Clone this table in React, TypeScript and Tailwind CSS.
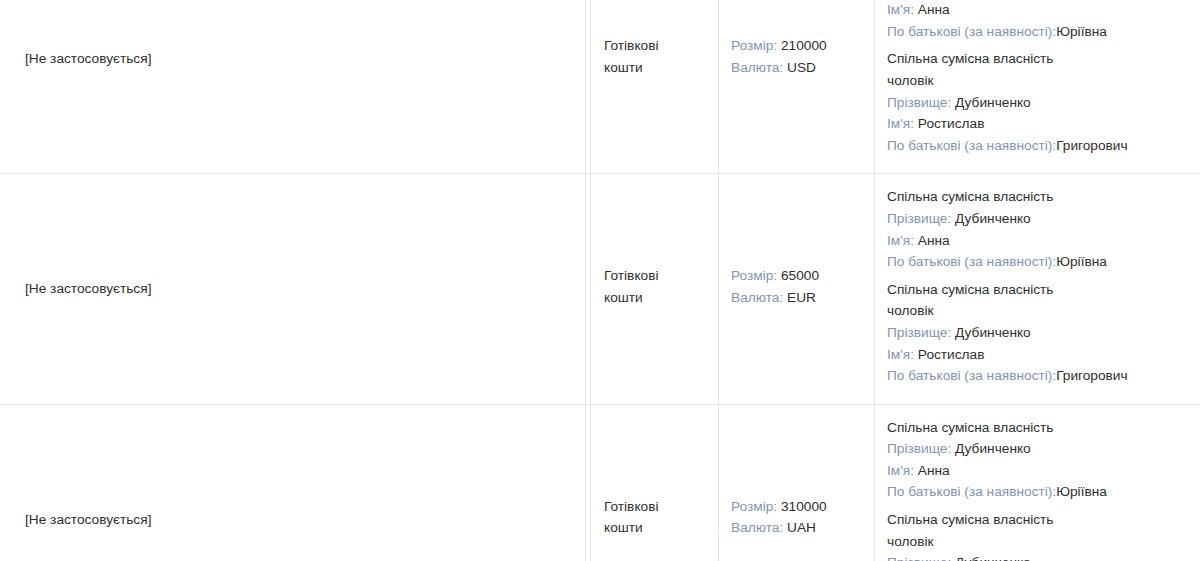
const rows = [
  { size: '210000', currency: 'USD' },
  { size: '65000', currency: 'EUR' },
  { size: '310000', currency: 'UAH' },
];

function Field({ label, value, tight }: { label: string; value: string; tight?: boolean }) {
  return (
    <div>
      <span className="text-[#8395b3]">{label}{tight ? '' : ' '}</span>
      <span>{value}</span>
    </div>
  );
}

function Owners() {
  return (
    <div>
      <div className="mb-[6px]">
        <div>Спільна сумісна власність</div>
        <Field label="Прізвище:" value="Дубинченко" />
        <Field label="Ім'я:" value="Анна" />
        <Field label="По батькові (за наявності):" value="Юріївна" tight />
      </div>
      <div className="mb-[6px]">
        <div>Спільна сумісна власність</div>
        <div>чоловік</div>
        <Field label="Прізвище:" value="Дубинченко" />
        <Field label="Ім'я:" value="Ростислав" />
        <Field label="По батькові (за наявності):" value="Григорович" tight />
      </div>
    </div>
  );
}

export default function App() {
  return (
    <div
      className="h-[561px] w-[1200px] overflow-hidden bg-white text-[13.7px] leading-[21.6px] text-[#2f2f2f]"
      style={{ fontFamily: '"Liberation Sans", Arial, sans-serif' }}
    >
      <div className="-mt-[56px]">
        {rows.map((r, i) => (
          <div key={i} className="flex border-b border-[#e6e6e6]">
            <div className="flex w-[586px] shrink-0 items-center border-r border-[#e6e6e6] pl-[25px]">
              [Не застосовується]
            </div>
            <div className="w-[5px] shrink-0 border-r border-[#e6e6e6]" />
            <div className="flex w-[128px] shrink-0 items-center border-r border-[#e6e6e6] pb-[4px] pl-[13px]">
              <div>
                Готівкові
                <br />
                кошти
              </div>
            </div>
            <div className="flex w-[156px] shrink-0 items-center border-r border-[#e6e6e6] pb-[4px] pl-[12px]">
              <div>
                <Field label="Розмір:" value={r.size} />
                <Field label="Валюта:" value={r.currency} />
              </div>
            </div>
            <div className="flex-1 pt-[12px] pb-[11px] pl-[12px]">
              <Owners />
            </div>
          </div>
        ))}
      </div>
    </div>
  );
}
